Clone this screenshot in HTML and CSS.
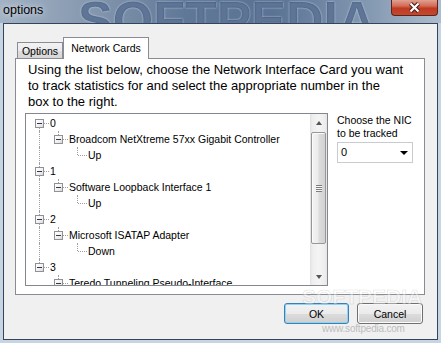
FILE: index.html
```html
<!DOCTYPE html>
<html lang="en">

<head>
  <meta charset="UTF-8">
  <title>options</title>
  <link rel="stylesheet" href="styles.css">
</head>

<body>

  <div class="window">
    <div class="titlebar">
      <div class="glass"><span class="glass-mark">SOFTPEDIA</span></div>
      <span class="title">options</span>
      <button class="close" title="Close">
        <svg width="13" height="11" viewBox="0 0 13 11">
          <path d="M2.5 1.5 L10.5 9.5 M10.5 1.5 L2.5 9.5" stroke="#4b1710" stroke-width="4.2" fill="none" />
          <path d="M2.5 1.5 L10.5 9.5 M10.5 1.5 L2.5 9.5" stroke="#fff" stroke-width="2.2" fill="none" />
        </svg>
      </button>
    </div>

    <div class="client">
      <div class="tabs">
        <div class="tab">Options</div>
        <div class="tab active">Network Cards</div>
      </div>

      <div class="panel">
        <p class="intro">Using the list below, choose the Network Interface Card you want<br>to track statistics for and select the appropriate number in the<br>box to the right.</p>

        <div class="panel-body">
          <div class="tree">
            <div class="tree-list">
              <div class="row"><span class="cell node down"><i class="toggle"></i></span><span class="label">0</span></div>
              <div class="row"><span class="cell pipe"></span><span class="cell node up"><i class="toggle"></i></span><span class="label">Broadcom NetXtreme 57xx Gigabit Controller</span></div>
              <div class="row"><span class="cell pipe"></span><span class="cell"></span><span class="cell elbow up"></span><span class="label">Up</span></div>
              <div class="row"><span class="cell node up down"><i class="toggle"></i></span><span class="label">1</span></div>
              <div class="row"><span class="cell pipe"></span><span class="cell node up"><i class="toggle"></i></span><span class="label">Software Loopback Interface 1</span></div>
              <div class="row"><span class="cell pipe"></span><span class="cell"></span><span class="cell elbow up"></span><span class="label">Up</span></div>
              <div class="row"><span class="cell node up down"><i class="toggle"></i></span><span class="label">2</span></div>
              <div class="row"><span class="cell pipe"></span><span class="cell node up"><i class="toggle"></i></span><span class="label">Microsoft ISATAP Adapter</span></div>
              <div class="row"><span class="cell pipe"></span><span class="cell"></span><span class="cell elbow up"></span><span class="label">Down</span></div>
              <div class="row"><span class="cell node up"><i class="toggle"></i></span><span class="label">3</span></div>
              <div class="row"><span class="cell"></span><span class="cell node up"><i class="toggle"></i></span><span class="label">Teredo Tunneling Pseudo-Interface</span></div>
            </div>
            <div class="scrollbar">
              <div class="sb-btn"><span class="arrow-up"></span></div>
              <div class="sb-track">
                <div class="sb-thumb"><span class="grip"></span></div>
              </div>
              <div class="sb-btn"><span class="arrow-down"></span></div>
            </div>
          </div>

          <div class="nic-picker">
            <label for="nic">Choose the NIC<br>to be tracked</label>
            <div class="select" id="nic">
              <span>0</span>
              <span class="caret"></span>
            </div>
          </div>
        </div>
      </div>

      <div class="actions">
        <button class="btn default">OK</button>
        <button class="btn cancel">Cancel</button>
      </div>

      <span class="sp-mark">SOFTPEDIA</span>
      <span class="sp-url">www.softpedia.com</span>
    </div>
  </div>

</body>

</html>
```

FILE: styles.css
```css
body {
  margin: 0;
  font-family: "Liberation Sans", Arial, sans-serif;
  color: #000;
}

.window {
  width: 441px;
  height: 343px;
  display: flex;
  flex-direction: column;
  background-color: #c7d4e1;
  overflow: hidden;
}

/* glass title bar */
.titlebar {
  position: relative;
  height: 23px;
  flex: none;
  display: flex;
  align-items: flex-start;
  overflow: hidden;
  background: linear-gradient(to right, #a3b3c5 0%, #8698af 20%, #5f7897 42%, #5a7394 62%, #8499b2 84%, #aebdcd 100%);
}

.glass {
  position: absolute;
  left: 0;
  top: 0;
  width: 100%;
  height: 23px;
  overflow: hidden;
}

.glass-mark {
  position: absolute;
  left: 78px;
  top: 9px;
  font-size: 52px;
  line-height: 23px;
  font-weight: bold;
  color: rgba(22, 48, 92, 0.6);
  text-shadow: 0 0 2px rgba(215, 230, 246, 0.9);
}

.title {
  position: relative;
  z-index: 1;
  padding-left: 3px;
  font-size: 12.5px;
  line-height: 20px;
  text-shadow: 0 0 6px rgba(255, 255, 255, 0.9);
}

.close {
  position: relative;
  z-index: 1;
  margin: 0 3px 0 auto;
  width: 47px;
  height: 16px;
  padding: 0;
  border: 1px solid #5c231b;
  border-top: 0;
  border-radius: 0 0 4px 4px;
  background: linear-gradient(#e0a192 0%, #d46a55 40%, #be3a22 55%, #c24a31 100%);
  display: flex;
  align-items: center;
  justify-content: center;
}

/* dialog body */
.client {
  position: relative;
  flex: 1;
  margin: 0 3px 3px 3px;
  border: 1px solid #34445a;
  background-color: #f0f0f0;
}

.tabs {
  position: relative;
  z-index: 1;
  display: flex;
  align-items: flex-end;
  height: 21px;
  margin: 13px 0 0 13px;
  font-size: 10.5px;
}

.tab {
  box-sizing: border-box;
  width: 46px;
  height: 16px;
  border: 1px solid #898c95;
  border-bottom: 0;
  display: flex;
  align-items: center;
  justify-content: center;
  background: linear-gradient(#f2f2f2 0%, #ebebeb 50%, #dedede 51%, #d6d6d6 100%);
}

.tab.active {
  width: 86px;
  height: 22px;
  margin-bottom: -1px;
  padding-bottom: 1px;
  background: #fff;
}

.panel {
  box-sizing: border-box;
  width: 410px;
  height: 237px;
  margin-left: 11px;
  border: 1px solid #898c95;
  background-color: #fff;
}

.intro {
  margin: 3px 0 0 12px;
  font-size: 13px;
  line-height: 16px;
  white-space: nowrap;
}

.panel-body {
  display: flex;
  align-items: flex-start;
  gap: 9px;
  margin: 3px 0 0 9px;
}

/* tree view */
.tree {
  box-sizing: border-box;
  width: 303px;
  height: 173px;
  border: 1px solid #828790;
  display: flex;
  background-color: #fff;
}

.tree-list {
  flex: 1;
  overflow: hidden;
  padding: 1px 0 0 4px;
  font-size: 10.5px;
}

.row {
  display: flex;
  height: 16px;
  line-height: 16px;
  white-space: nowrap;
}

.cell {
  position: relative;
  flex: none;
  width: 19px;
  height: 16px;
}

.pipe::before,
.up::before,
.down::before {
  content: '';
  position: absolute;
  left: 9px;
  top: 0;
  bottom: 0;
  border-left: 1px dotted #a0a0a0;
}

.up::before {
  bottom: 8px;
}

.down::before {
  top: 8px;
}

.up.down::before {
  top: 0;
  bottom: 0;
}

.node::after,
.elbow::after {
  content: '';
  position: absolute;
  left: 10px;
  right: 0;
  top: 8px;
  border-top: 1px dotted #a0a0a0;
}

.toggle {
  position: absolute;
  z-index: 1;
  left: 5px;
  top: 4px;
  box-sizing: border-box;
  width: 9px;
  height: 9px;
  border: 1px solid #919191;
  background: linear-gradient(135deg, #fff 0%, #f0f0f0 60%, #d8d8d8 100%);
}

.toggle::before {
  content: '';
  position: absolute;
  left: 1px;
  top: 3px;
  width: 5px;
  height: 1px;
  background-color: #2c3c58;
}

.label {
  margin-left: 1px;
}

/* scrollbar */
.scrollbar {
  width: 17px;
  display: flex;
  flex-direction: column;
  background: linear-gradient(to right, #e2e2e2 0%, #eeeeee 15%, #f4f4f4 50%, #eeeeee 85%, #e4e4e4 100%);
}

.sb-btn {
  height: 17px;
  flex: none;
  display: flex;
  align-items: center;
  justify-content: center;
}

.arrow-up {
  width: 0;
  border-left: 3px solid transparent;
  border-right: 3px solid transparent;
  border-bottom: 4px solid #555;
}

.arrow-down {
  width: 0;
  border-left: 3px solid transparent;
  border-right: 3px solid transparent;
  border-top: 4px solid #555;
}

.sb-track {
  flex: 1;
  padding-top: 1px;
}

.sb-thumb {
  box-sizing: border-box;
  height: 112px;
  margin: 0 1px;
  border: 1px solid #979797;
  border-radius: 2px;
  display: flex;
  align-items: center;
  justify-content: center;
  background: linear-gradient(to right, #f4f4f4 0%, #ececec 45%, #dcdcdc 55%, #d2d2d2 100%);
  box-shadow: inset 1px 1px 0 #fbfbfb;
}

.grip {
  width: 6px;
  height: 7px;
  background: repeating-linear-gradient(#7d7d7d 0, #7d7d7d 1px, #f6f6f6 1px, #f6f6f6 2px);
}

/* NIC chooser */
.nic-picker {
  width: 76px;
  padding-top: 1px;
  font-size: 10.5px;
  line-height: 13px;
  white-space: nowrap;
}

.select {
  box-sizing: border-box;
  height: 21px;
  margin-top: 2px;
  padding: 0 4px 0 3px;
  border: 1px solid #c8ccd1;
  background-color: #fff;
  display: flex;
  align-items: center;
  justify-content: space-between;
  font-size: 11px;
}

.caret {
  width: 0;
  border-left: 4px solid transparent;
  border-right: 4px solid transparent;
  border-top: 4px solid #000;
}

/* buttons */
.actions {
  display: flex;
  justify-content: flex-end;
  gap: 8px;
  margin: 8px 14px 0 0;
}

.btn {
  width: 65px;
  height: 21px;
  padding: 0;
  font-family: "Liberation Sans", Arial, sans-serif;
  font-size: 10.5px;
  color: #000;
  border: 1px solid #707070;
  border-radius: 3px;
  background: linear-gradient(#f2f2f2 0%, #ebebeb 50%, #dddddd 51%, #cfcfcf 100%);
  box-shadow: inset 0 0 0 1px #fbfbfb;
}

.btn.cancel {
  width: 66px;
}

.btn.default {
  border-color: #3c7fb1;
  box-shadow: inset 0 0 0 1px #8fd3f5;
}

/* watermark */
.sp-mark {
  position: absolute;
  left: 298px;
  top: 262px;
  font-size: 21px;
  line-height: 21px;
  font-weight: bold;
  color: rgba(255, 255, 255, 0.4);
  -webkit-text-stroke: 0.6px rgba(140, 140, 140, 0.3);
}

.sp-url {
  position: absolute;
  left: 318px;
  top: 299px;
  font-size: 10px;
  line-height: 12px;
  letter-spacing: -0.2px;
  color: #bdbdbd;
}
```
